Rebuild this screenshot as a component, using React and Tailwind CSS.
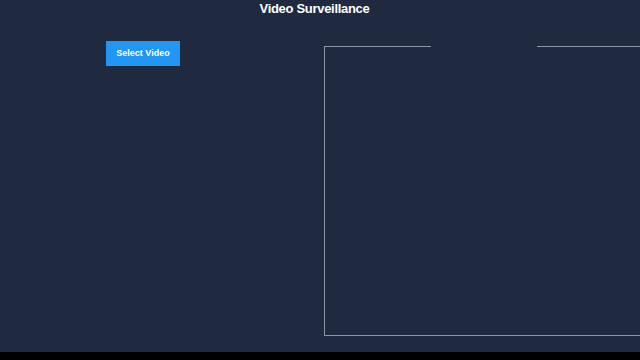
export default function App() {
  return (
    <div className="bg-black w-full h-[360px] overflow-hidden" style={{ fontFamily: '"Liberation Sans", Arial, sans-serif' }}>
      <div className="h-[352px] bg-[#1f2a40] flex flex-col">
        <h1 className="w-[629px] h-[20px] pt-[1px] text-center text-[13px] leading-[15px] font-bold text-white tracking-[-0.3px]">
          Video Surveillance
        </h1>
        <div className="flex">
          <div className="w-[324px] shrink-0">
            <button className="ml-[106px] mt-[21px] w-[74px] h-[25px] pt-[1px] bg-[#2196f3] text-white text-[9px] font-bold">
              Select Video
            </button>
          </div>
          <fieldset className="mt-[26px] h-[290px] flex-1 border border-r-0 border-[#8c95a8] p-0 m-0">
            <legend className="ml-[106px] w-[106px] h-0 p-0"></legend>
          </fieldset>
        </div>
      </div>
    </div>
  )
}
